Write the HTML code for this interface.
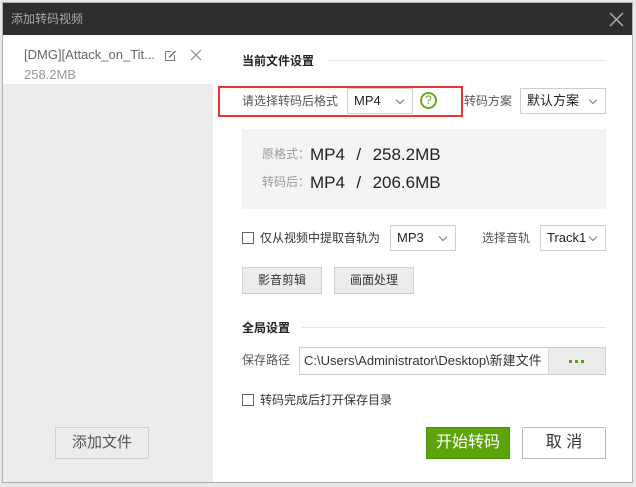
<!DOCTYPE html>
<html><head><meta charset="utf-8"><style>
*{box-sizing:border-box;margin:0;padding:0}
body{width:636px;height:487px;background:#e8e8e8;font-family:"Liberation Sans","Noto Sans CJK SC",sans-serif;font-size:12px;color:#333;position:relative;overflow:hidden}
.win{position:absolute;left:2px;top:2px;width:631px;height:481px;background:#fff;border:1px solid #b0b0b0}
.a{position:absolute;line-height:16px}
.title{left:0;top:0;width:629px;height:32px;background:#2e2e2e;color:#a8a8a8;font-size:12px;line-height:32px;padding-left:8px}
.left{left:0;top:81px;width:210px;height:398px;background:#ececec}
.sel{border:1px solid #cfcfcf;background:#fff;height:26px;line-height:24px;padding-left:6px;font-size:13px;color:#222}
.sel:after{content:"";position:absolute;right:9px;top:8px;width:5px;height:5px;border-right:1px solid #777;border-bottom:1px solid #777;transform:rotate(45deg)}
.btn{border:1px solid #d0d0d0;background:#ececec;text-align:center;line-height:25px;color:#333}
.cb{width:12px;height:12px;border:1px solid #666;background:#fff}
.line{height:1px;background:#e4e4e4}
</style></head><body>
<div class="win">
<div class="a title">添加转码视频</div>
<svg class="a" style="left:606px;top:9px" width="15" height="15"><path d="M1 1L14 14M14 1L1 14" stroke="#aaa" stroke-width="1.5"/></svg>
<div class="a" style="left:21px;top:44px;color:#666;font-size:13px">[DMG][Attack_on_Tit...</div>
<svg class="a" style="left:161px;top:46px" width="13" height="13"><path d="M1.5 2.5H7M1.5 2.5V11.5H10.5V6" stroke="#777" fill="none"/><path d="M5 8.5L11.5 2" stroke="#777" stroke-width="1.5"/></svg>
<svg class="a" style="left:187px;top:46px" width="12" height="12"><path d="M1 1L11 11M11 1L1 11" stroke="#888" stroke-width="1.2"/></svg>
<div class="a" style="left:21px;top:64px;color:#999;font-size:13px">258.2MB</div>
<div class="a left"></div>
<div class="a btn" style="left:52px;top:424px;width:94px;height:32px;line-height:30px;font-size:15px;color:#555;background:#ececec">添加文件</div>

<div class="a" style="left:239px;top:50px;font-weight:bold;color:#222">当前文件设置</div>
<div class="a line" style="left:324px;top:57px;width:279px"></div>
<div class="a" style="left:215px;top:83px;width:245px;height:31px;border:2px solid #ee3338"></div>
<div class="a" style="left:239px;top:90px;color:#555">请选择转码后格式</div>
<div class="a sel" style="left:344px;top:85px;width:66px">MP4</div>
<div class="a" style="left:417px;top:89px;width:17px;height:17px;border:2px solid #6aab1f;border-radius:50%;color:#6aab1f;font-size:12px;line-height:13px;text-align:center">?</div>
<div class="a" style="left:461px;top:90px;color:#555">转码方案</div>
<div class="a sel" style="left:517px;top:85px;width:86px">默认方案</div>

<div class="a" style="left:239px;top:126px;width:364px;height:80px;background:#f4f4f4"></div>
<div class="a" style="left:259px;top:143px;color:#999">原格式：</div>
<div class="a" style="left:307px;top:142px;font-size:17px;line-height:20px;color:#222;word-spacing:1px">MP4 &nbsp;/ &nbsp;258.2MB</div>
<div class="a" style="left:259px;top:171px;color:#999">转码后：</div>
<div class="a" style="left:307px;top:170px;font-size:17px;line-height:20px;color:#222;word-spacing:1px">MP4 &nbsp;/ &nbsp;206.6MB</div>

<div class="a cb" style="left:239px;top:229px"></div>
<div class="a" style="left:257px;top:227px;color:#333">仅从视频中提取音轨为</div>
<div class="a sel" style="left:387px;top:222px;width:66px">MP3</div>
<div class="a" style="left:479px;top:227px;color:#555">选择音轨</div>
<div class="a sel" style="left:537px;top:222px;width:66px">Track1</div>

<div class="a btn" style="left:239px;top:264px;width:80px;height:27px">影音剪辑</div>
<div class="a btn" style="left:331px;top:264px;width:80px;height:27px">画面处理</div>

<div class="a" style="left:239px;top:317px;font-weight:bold;color:#222">全局设置</div>
<div class="a line" style="left:299px;top:324px;width:304px"></div>
<div class="a" style="left:239px;top:349px;color:#555">保存路径</div>
<div class="a" style="left:296px;top:344px;width:307px;height:28px;border:1px solid #cfcfcf;line-height:26px;padding-left:4px;font-size:13px;color:#333;overflow:hidden;white-space:nowrap">C:\Users\Administrator\Desktop\新建文件</div>
<div class="a" style="left:545px;top:345px;width:57px;height:26px;background:#ececec;border-left:1px solid #d8d8d8"></div>
<div class="a" style="left:566px;top:357px;width:3px;height:3px;background:#5ba30a;box-shadow:6px 0 #5ba30a,12px 0 #5ba30a"></div>

<div class="a cb" style="left:239px;top:391px"></div>
<div class="a" style="left:257px;top:389px;color:#333">转码完成后打开保存目录</div>

<div class="a" style="left:423px;top:424px;width:84px;height:32px;background:#5ca40a;border:1px solid #4d8f08;color:#fff;font-size:16px;text-align:center;line-height:30px">开始转码</div>
<div class="a" style="left:519px;top:424px;width:84px;height:32px;background:#fff;border:1px solid #bbb;color:#333;font-size:16px;text-align:center;line-height:30px">取 消</div>
</div>
</body></html>
